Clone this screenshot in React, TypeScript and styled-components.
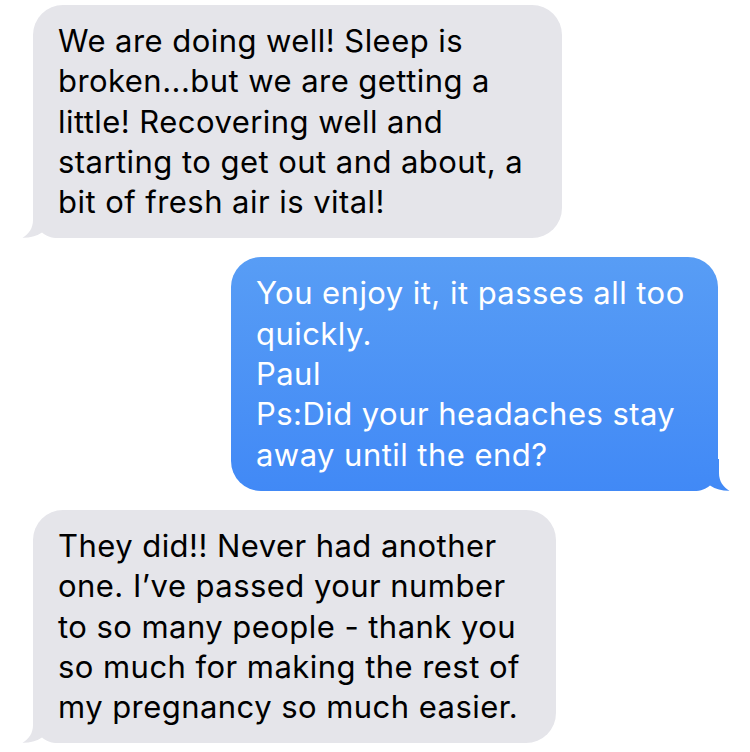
import React from "react";
import styled, { createGlobalStyle } from "styled-components";

const GlobalStyle = createGlobalStyle`
  html, body {
    margin: 0;
    padding: 0;
    background: #ffffff;
  }
  body {
    font-family: "Inter", "Roboto", "Liberation Sans", sans-serif;
    -webkit-font-smoothing: antialiased;
  }
`;

const Thread = styled.div`
  width: 750px;
  height: 752px;
  box-sizing: border-box;
  padding: 5px 32px 0 33px;
  display: flex;
  flex-direction: column;
  gap: 19px;
  overflow: hidden;
`;

const Bubble = styled.div<{ $out?: boolean; $w: number }>`
  position: relative;
  box-sizing: border-box;
  width: ${(p) => p.$w}px;
  align-self: ${(p) => (p.$out ? "flex-end" : "flex-start")};
  padding: 16px 20px 16px 25px;
  border-radius: 30px;
  background: ${(p) =>
    p.$out ? "linear-gradient(180deg, #589df5 0%, #4189f6 100%)" : "#e5e5ea"};
  color: ${(p) => (p.$out ? "#ffffff" : "#000000")};
  font-size: 31px;
  line-height: 40.3px;
  letter-spacing: 0.45px;
`;

const Text = styled.div`
  position: relative;
  z-index: 1;
`;

const Line = styled.span`
  display: block;
  white-space: nowrap;
`;

const TailSvg = styled.svg<{ $out?: boolean }>`
  position: absolute;
  bottom: 0;
  width: 42px;
  height: 32px;
  z-index: 0;
  ${(p) => (p.$out ? "right: -12px; transform: scaleX(-1);" : "left: -11px;")}
`;

function Tail({ out, id }: { out?: boolean; id: string }) {
  return (
    <TailSvg $out={out} viewBox="0 0 42 32" aria-hidden>
      {out && (
        <defs>
          <linearGradient id={id} x1="0" y1="0" x2="0" y2="1">
            <stop offset="0" stopColor="#448cf6" />
            <stop offset="1" stopColor="#4189f6" />
          </linearGradient>
        </defs>
      )}
      <path
        d="M11 0 L11 14 C11 22 7 28 0.5 31.8 C7 32 14 30.5 20 26.5 C24 30 29 32 36 32 L42 32 L42 0 Z"
        fill={out ? `url(#${id})` : "#e5e5ea"}
      />
    </TailSvg>
  );
}

type Msg = { out?: boolean; w: number; lines: string[] };

const messages: Msg[] = [
  {
    w: 529,
    lines: [
      "We are doing well! Sleep is",
      "broken...but we are getting a",
      "little! Recovering well and",
      "starting to get out and about, a",
      "bit of fresh air is vital!",
    ],
  },
  {
    out: true,
    w: 487,
    lines: [
      "You enjoy it, it passes all too",
      "quickly.",
      "Paul",
      "Ps:Did your headaches stay",
      "away until the end?",
    ],
  },
  {
    w: 523,
    lines: [
      "They did!! Never had another",
      "one. I\u2019ve passed your number",
      "to so many people - thank you",
      "so much for making the rest of",
      "my pregnancy so much easier.",
    ],
  },
];

export default function App() {
  return (
    <>
      <GlobalStyle />
      <Thread>
        {messages.map((m, i) => (
          <Bubble key={i} $out={m.out} $w={m.w}>
            <Tail out={m.out} id={`tail-grad-${i}`} />
            <Text>
              {m.lines.map((l, j) => (
                <Line key={j}>{l}</Line>
              ))}
            </Text>
          </Bubble>
        ))}
      </Thread>
    </>
  );
}
